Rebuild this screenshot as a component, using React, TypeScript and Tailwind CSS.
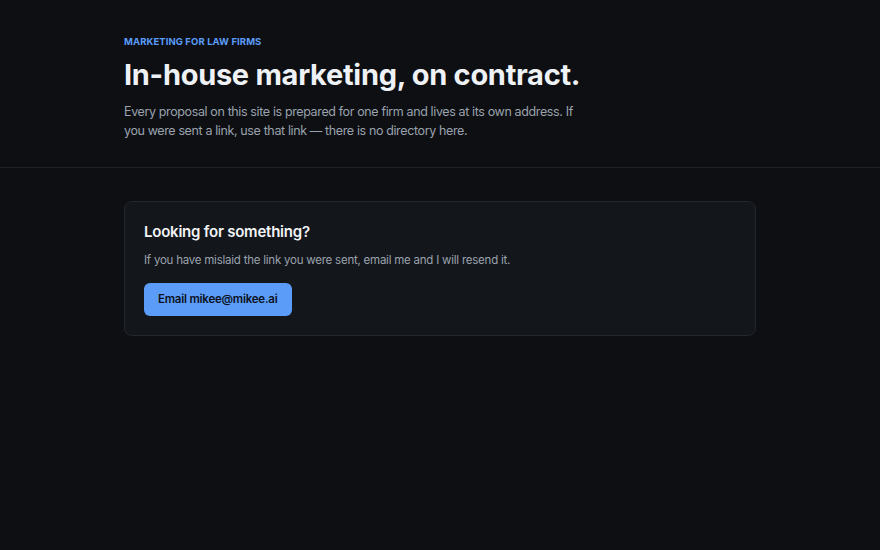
export default function App() {
  return (
    <div
      className="min-h-[550px] bg-[#0d0f13] text-[#e6e9ee]"
      style={{ fontFamily: 'Inter, "Noto Sans", sans-serif' }}
    >
      <header className="border-b border-[#1f2329]">
        <div className="mx-auto max-w-[632px] pt-[36px] pb-[27px]">
          <p className="text-[9.5px] font-bold uppercase tracking-[0.01em] text-[#5b9cf8] leading-[12px]">
            Marketing for law firms
          </p>
          <h1 className="mt-[9px] text-[29px] font-bold leading-[36px] tracking-[-0.01em] text-[#eef1f5]">
            In-house marketing, on contract.
          </h1>
          <p className="mt-[9px] max-w-[460px] text-[12.5px] leading-[19px] tracking-[-0.03em] text-[#9aa2ad]">
            Every proposal on this site is prepared for one firm and lives at its own address. If
            you were sent a link, use that link — there is no directory here.
          </p>
        </div>
      </header>

      <main className="mx-auto max-w-[632px] pt-[33px]">
        <section className="rounded-lg border border-[#232830] bg-[#13161b] px-[19px] pt-[19px] pb-[19px]">
          <h2 className="text-[15px] font-semibold leading-[22px] tracking-[-0.015em] text-[#f1f3f6]">
            Looking for something?
          </h2>
          <p className="mt-[8px] text-[11.5px] leading-[18px] tracking-[-0.02em] text-[#9aa2ad]">
            If you have mislaid the link you were sent, email me and I will resend it.
          </p>
          <a
            href="mailto:mikee@mikee.ai"
            className="mt-[14px] inline-flex h-[33px] items-center rounded-md bg-[#5b9cf8] px-[14px] text-[11.5px] font-semibold tracking-[-0.02em] text-[#0b1222]"
          >
            Email mikee@mikee.ai
          </a>
        </section>
      </main>
    </div>
  );
}
